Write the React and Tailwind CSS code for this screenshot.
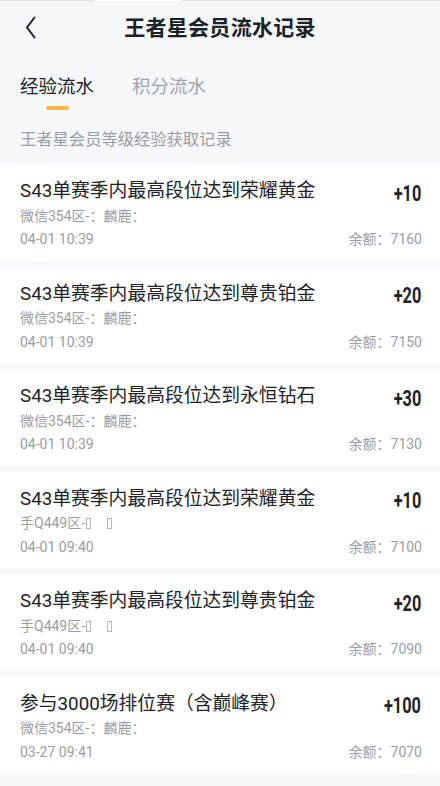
import React from 'react';

const records = [
  { title: 'S43单赛季内最高段位达到荣耀黄金', who: '微信354区-：麟鹿：', time: '04-01 10:39', amount: '+10', balance: '7160' },
  { title: 'S43单赛季内最高段位达到尊贵铂金', who: '微信354区-：麟鹿：', time: '04-01 10:39', amount: '+20', balance: '7150' },
  { title: 'S43单赛季内最高段位达到永恒钻石', who: '微信354区-：麟鹿：', time: '04-01 10:39', amount: '+30', balance: '7130' },
  { title: 'S43单赛季内最高段位达到荣耀黄金', who: 'qq', time: '04-01 09:40', amount: '+10', balance: '7100' },
  { title: 'S43单赛季内最高段位达到尊贵铂金', who: 'qq', time: '04-01 09:40', amount: '+20', balance: '7090' },
  { title: '参与3000场排位赛（含巅峰赛）', who: '微信354区-：麟鹿：', time: '03-27 09:41', amount: '+100', balance: '7070' },
];

// missing-glyph boxes as shown in the source
const Tofu = ({ className = '' }) => (
  <span className={`inline-block w-[5px] h-[11px] border border-[#b4b7bc] align-[-1px] ${className}`} />
);

function Who({ value }) {
  if (value === 'qq') {
    return (
      <span className="flex items-center">
        手Q449区-
        <Tofu className="ml-[1px]" />
        <Tofu className="ml-[16px]" />
      </span>
    );
  }
  return <span>{value}</span>;
}

function RecordCard({ r }) {
  return (
    <div className="bg-white h-[96.5px] pl-5 pr-[18px] pt-[14px]">
      <div className="flex items-center justify-between h-[27px]">
        <span className="text-[18.8px] text-[#1d2228]">{r.title}</span>
        <span className="inline-block origin-right scale-x-[0.74] text-[22px] font-bold text-[#1b2329] mr-px mt-[3px]">
          {r.amount}
        </span>
      </div>
      <div className="h-[22px] flex items-center text-[14px] text-[#9a9da3]">
        <Who value={r.who} />
      </div>
      <div className="mt-px h-[23px] flex items-center justify-between text-[14px] text-[#9a9da3]">
        <span>{r.time}</span>
        <span>余额：{r.balance}</span>
      </div>
    </div>
  );
}

export default function App() {
  return (
    <div
      className="w-[440px] h-[786px] overflow-hidden bg-[#f6f7fb]"
      style={{ fontFamily: 'Roboto, "Noto Sans CJK SC", sans-serif' }}
    >
      {/* top edge */}
      <div className="flex h-px">
        <div className="w-[95px] bg-[#e2e3e6]" />
        <div className="w-[86px] bg-white" />
        <div className="flex-1 bg-[#e2e3e6]" />
      </div>

      {/* Header */}
      <div className="relative h-[56px] flex items-center justify-center">
        <button className="absolute left-[21px] top-[14px] w-6 h-6 flex items-center justify-center text-[#1d2228]">
          <svg viewBox="0 0 24 24" width="24" height="24" fill="none" stroke="currentColor" strokeWidth="2" strokeLinecap="round" strokeLinejoin="round">
            <path d="M13.5 2.5 6 12.5l7.5 10" />
          </svg>
        </button>
        <h1 className="text-[21px] font-bold text-[#1a2228] tracking-[0.3px]">王者星会员流水记录</h1>
      </div>

      {/* Tabs */}
      <div className="flex items-start px-5 pt-[3px] h-[60px]">
        <div className="flex flex-col items-center">
          <span className="text-[18.5px] leading-[54px] h-[54px] text-[#1d2228]">经验流水</span>
          <span className="block w-[23px] h-[3.5px] rounded-full bg-[#fbb44a] mt-[-8px]" />
        </div>
        <span className="ml-[38px] text-[18.5px] leading-[54px] text-[#a0a3a8]">积分流水</span>
      </div>

      {/* Subtitle */}
      <div className="px-5 h-[47px] flex items-center text-[16.3px] text-[#9a9da3]">王者星会员等级经验获取记录</div>

      {/* Records */}
      <div className="flex flex-col gap-[6px]">
        {records.map((r, i) => (
          <RecordCard key={i} r={r} />
        ))}
      </div>
    </div>
  );
}
